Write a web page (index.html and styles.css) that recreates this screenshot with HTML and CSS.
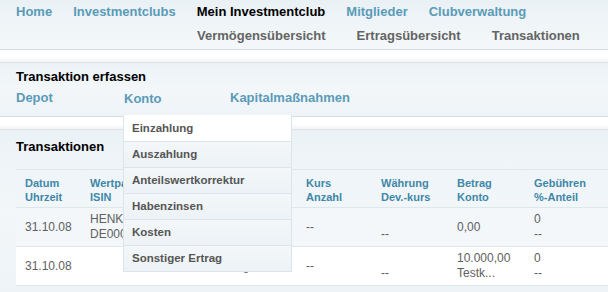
FILE: index.html
```html
<!DOCTYPE html>
<html lang="de">
<head>
<meta charset="utf-8">
<title>Transaktionen</title>
<link rel="stylesheet" href="styles.css">
</head>
<body>
<header class="topnav">
  <nav class="mainnav">
    <a class="nav-link" href="#">Home</a>
    <a class="nav-link" href="#">Investmentclubs</a>
    <a class="nav-link active" href="#">Mein Investmentclub</a>
    <a class="nav-link" href="#">Mitglieder</a>
    <a class="nav-link" href="#">Clubverwaltung</a>
  </nav>
  <nav class="subnav">
    <a class="sub-link" href="#">Vermögensübersicht</a>
    <a class="sub-link" href="#">Ertragsübersicht</a>
    <a class="sub-link" href="#">Transaktionen</a>
  </nav>
</header>
<div class="spacer"></div>
<section class="panel capture">
  <h2 class="panel-title">Transaktion erfassen</h2>
  <div class="tabs">
    <a class="tab" href="#">Depot</a>
    <div class="tab-wrap">
      <a class="tab" href="#">Konto</a>
      <ul class="dropdown">
        <li class="dd-item first">Einzahlung</li>
        <li class="dd-item">Auszahlung</li>
        <li class="dd-item">Anteilswertkorrektur</li>
        <li class="dd-item">Habenzinsen</li>
        <li class="dd-item">Kosten</li>
        <li class="dd-item">Sonstiger Ertrag</li>
      </ul>
    </div>
    <a class="tab" href="#">Kapitalmaßnahmen</a>
  </div>
</section>
<div class="spacer"></div>
<section class="panel list">
  <h2 class="panel-title">Transaktionen</h2>
  <table class="tx">
    <colgroup>
      <col class="c1"><col class="c2"><col class="c3"><col class="c4"><col class="c5"><col class="c6"><col class="c7">
    </colgroup>
    <thead>
      <tr>
        <th>Datum<br>Uhrzeit</th>
        <th>Wertpapier<br>ISIN</th>
        <th>Art<br>Bezeichnung</th>
        <th>Kurs<br>Anzahl</th>
        <th>Währung<br>Dev.-kurs</th>
        <th>Betrag<br>Konto</th>
        <th>Gebühren<br>%-Anteil</th>
      </tr>
    </thead>
    <tbody>
      <tr class="odd">
        <td>31.10.08</td>
        <td>HENKEL AG<br>DE0006048432</td>
        <td>Dividende ...</td>
        <td>--</td>
        <td><br>--</td>
        <td>0,00</td>
        <td>0<br>--</td>
      </tr>
      <tr class="even">
        <td>31.10.08</td>
        <td></td>
        <td>Einzahlung</td>
        <td>--</td>
        <td><br>--</td>
        <td>10.000,00<br>Testk...</td>
        <td>0<br>--</td>
      </tr>
    </tbody>
  </table>
</section>
</body>
</html>
```
FILE: styles.css
```css
html, body {
  margin: 0;
  padding: 0;
  background: #ffffff;
  font-family: "Liberation Sans", Arial, sans-serif;
  overflow: hidden;
}

a { text-decoration: none; }

.topnav {
  height: 49px;
  box-sizing: border-box;
  padding: 4px 0 0 16px;
  background: linear-gradient(#eaf1f5, #f4f8fa);
}

.mainnav {
  display: flex;
  gap: 21px;
  height: 16px;
  line-height: 16px;
}

.nav-link {
  font-size: 13px;
  font-weight: bold;
  color: #5a9bb8;
}

.nav-link.active { color: #000000; }

.subnav {
  display: flex;
  gap: 31px;
  margin: 8px 0 0 181px;
  height: 16px;
  line-height: 16px;
}

.sub-link {
  font-size: 13px;
  font-weight: bold;
  color: #646464;
}

.spacer {
  height: 12px;
  border-top: 1px solid #d8dde1;
  border-bottom: 1px solid #dce2e6;
  background: linear-gradient(#ffffff, #ffffff 60%, #f3f3f3);
}

.panel {
  background: linear-gradient(#ebf2f6, #f3f7fa 50%, #eef3f7);
  padding-left: 16px;
}

.capture {
  height: 53px;
  box-sizing: border-box;
  padding-top: 6px;
}

.panel-title {
  margin: 0;
  font-size: 13px;
  line-height: 16px;
  font-weight: bold;
  color: #000;
}

.tabs {
  display: flex;
  margin-top: 5px;
  height: 16px;
  line-height: 16px;
}

.tab {
  font-size: 13px;
  font-weight: bold;
  color: #5a9bb8;
}

.tabs > .tab:first-child { width: 108px; }

.tab-wrap {
  position: relative;
  width: 106px;
}

.dropdown {
  position: absolute;
  left: -1px;
  top: 25px;
  z-index: 5;
  width: 167px;
  margin: 0;
  padding: 0;
  list-style: none;
  border: 1px solid #dbe5eb;
  border-top: none;
  background: #eff4f7;
}

.dd-item {
  height: 25px;
  line-height: 25px;
  padding-left: 8px;
  border-top: 1px solid #dbe5eb;
  font-size: 11.5px;
  font-weight: bold;
  color: #555555;
  background: linear-gradient(#f3f7f9, #ecf2f6);
}

.dd-item.first {
  background: #ffffff;
  border-top-color: #ffffff;
}

.list {
  padding-top: 9px;
  padding-bottom: 6px;
}

.list .panel-title { margin-bottom: 14px; }

.tx {
  border-collapse: collapse;
  table-layout: fixed;
  width: 592px;
  font-size: 12px;
}

.c1 { width: 65px; }
.c2 { width: 100px; }
.c3 { width: 116px; }
.c4 { width: 75px; }
.c5 { width: 76px; }
.c6 { width: 77px; }
.c7 { width: 83px; }

.tx th {
  height: 38px;
  box-sizing: border-box;
  padding: 2px 0 0 9px;
  text-align: left;
  vertical-align: middle;
  font-size: 11px;
  line-height: 14px;
  font-weight: bold;
  color: #3f87a8;
  background: linear-gradient(#eef4f8, #f1f6f9);
  border-top: 1px solid #dce7ee;
  border-bottom: 1px solid #dce7ee;
  white-space: nowrap;
  overflow: hidden;
}

.tx td {
  height: 38px;
  padding: 0 0 0 9px;
  vertical-align: middle;
  line-height: 15px;
  color: #606060;
  border-bottom: 1px solid #dce7ee;
  white-space: nowrap;
  overflow: hidden;
}

.tx tr.odd td { background: #f3f7fa; }
.tx tr.even td { background: #ffffff; }
```
